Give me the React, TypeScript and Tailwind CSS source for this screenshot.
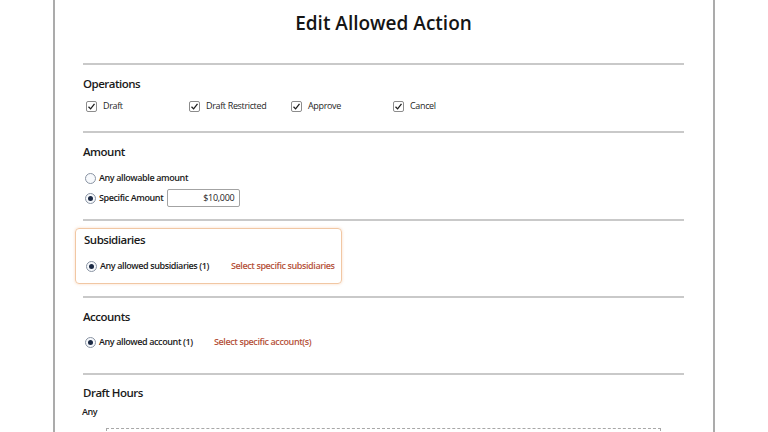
import React from "react";

const font = { fontFamily: '"Open Sans", "Noto Sans", sans-serif' };

function Rule() {
  return <div className="h-[2px] w-full bg-[#c9c9c9]" />;
}

function Check({ label }: { label: string }) {
  return (
    <div className="flex items-center gap-[6px]">
      <span className="flex h-[11px] w-[11px] items-center justify-center rounded-[2px] border border-[#8c8c8c] bg-white">
        <svg viewBox="0 0 12 12" className="h-[9px] w-[9px]">
          <path d="M2 6.4 L4.8 9.2 L10 2.6" fill="none" stroke="#1e1e1e" strokeWidth="1.7" />
        </svg>
      </span>
      <span className="whitespace-nowrap text-[9px] tracking-[-0.35px] text-[#1f1f1f]">{label}</span>
    </div>
  );
}

function Radio({ on, label }: { on?: boolean; label: string }) {
  return (
    <div className="flex items-center gap-[3px]">
      <span className="flex h-[11px] w-[11px] items-center justify-center rounded-full border border-[#8a94a3] bg-[#f7f9fc]">
        {on && <span className="h-[5px] w-[5px] rounded-full bg-[#1c2a44]" />}
      </span>
      <span className="whitespace-nowrap text-[9px] font-semibold tracking-[-0.4px] text-[#1a1a1a]">{label}</span>
    </div>
  );
}

function Heading({ children }: { children: React.ReactNode }) {
  return (
    <div className="flex h-[16px] items-center text-[11.5px] font-semibold tracking-[-0.5px] text-[#1a1a1a]">
      {children}
    </div>
  );
}

function Link({ children }: { children: React.ReactNode }) {
  return (
    <span className="whitespace-nowrap text-[9px] font-semibold tracking-[-0.4px] text-[#b5523a]">{children}</span>
  );
}

export default function App() {
  return (
    <div className="flex h-[432px] w-full justify-center overflow-hidden bg-white" style={font}>
      <div className="w-[662px] shrink-0 border-x-2 border-[#ababab] pl-[28px] pr-[29px]">
        <div className="flex h-[46px] items-center justify-center text-[19px] font-semibold text-[#151515]">
          Edit Allowed Action
        </div>

        <div className="h-[17px]" />
        <Rule />

        <div className="h-[11px]" />
        <Heading>Operations</Heading>
        <div className="h-[6px]" />
        <div className="flex h-[16px] items-center pl-[3px]">
          <div className="w-[103px]"><Check label="Draft" /></div>
          <div className="w-[102px]"><Check label="Draft Restricted" /></div>
          <div className="w-[102px]"><Check label="Approve" /></div>
          <div><Check label="Cancel" /></div>
        </div>

        <div className="h-[17px]" />
        <Rule />

        <div className="h-[11px]" />
        <Heading>Amount</Heading>
        <div className="h-[10px]" />
        <div className="flex h-[16px] items-center pl-[2px]">
          <Radio label="Any allowable amount" />
        </div>
        <div className="h-[2px]" />
        <div className="flex h-[20px] items-center gap-[4px] pl-[2px]">
          <Radio on label="Specific Amount" />
          <div className="flex h-[18px] w-[73px] items-center justify-end rounded-[2px] border border-[#a3a3a3] pr-[5px] text-[9px] tracking-[-0.3px] text-[#1a1a1a]">
            $10,000
          </div>
        </div>

        <div className="h-[11px]" />
        <Rule />

        <div className="h-[7px]" />
        <div className="-ml-[8px] w-[267px] rounded-[4px] border border-[#f1c7a3] pb-[9px] pl-[8px] pt-[3px] shadow-[0_0_3px_rgba(240,170,120,0.45)]">
          <Heading>Subsidiaries</Heading>
          <div className="h-[10px]" />
          <div className="flex h-[16px] items-center pl-[2px]">
            <div className="w-[145px]"><Radio on label="Any allowed subsidiaries (1)" /></div>
            <Link>Select specific subsidiaries</Link>
          </div>
        </div>

        <div className="h-[12px]" />
        <Rule />

        <div className="h-[11px]" />
        <Heading>Accounts</Heading>
        <div className="h-[9px]" />
        <div className="flex h-[16px] items-center pl-[2px]">
          <div className="w-[129px]"><Radio on label="Any allowed account (1)" /></div>
          <Link>Select specific account(s)</Link>
        </div>

        <div className="h-[23px]" />
        <Rule />

        <div className="h-[10px]" />
        <Heading>Draft Hours</Heading>
        <div className="h-[4px]" />
        <div className="-ml-[1px] flex h-[14px] items-center text-[9px] font-semibold tracking-[-0.4px] text-[#1a1a1a]">Any</div>
        <div className="h-[9px]" />
        <div className="ml-[23px] w-[555px] border border-dashed border-[#a8a8a8] pt-[1px] text-center text-[10px] font-semibold tracking-wide text-[#777]">
          ANY DAY
        </div>
      </div>
    </div>
  );
}
